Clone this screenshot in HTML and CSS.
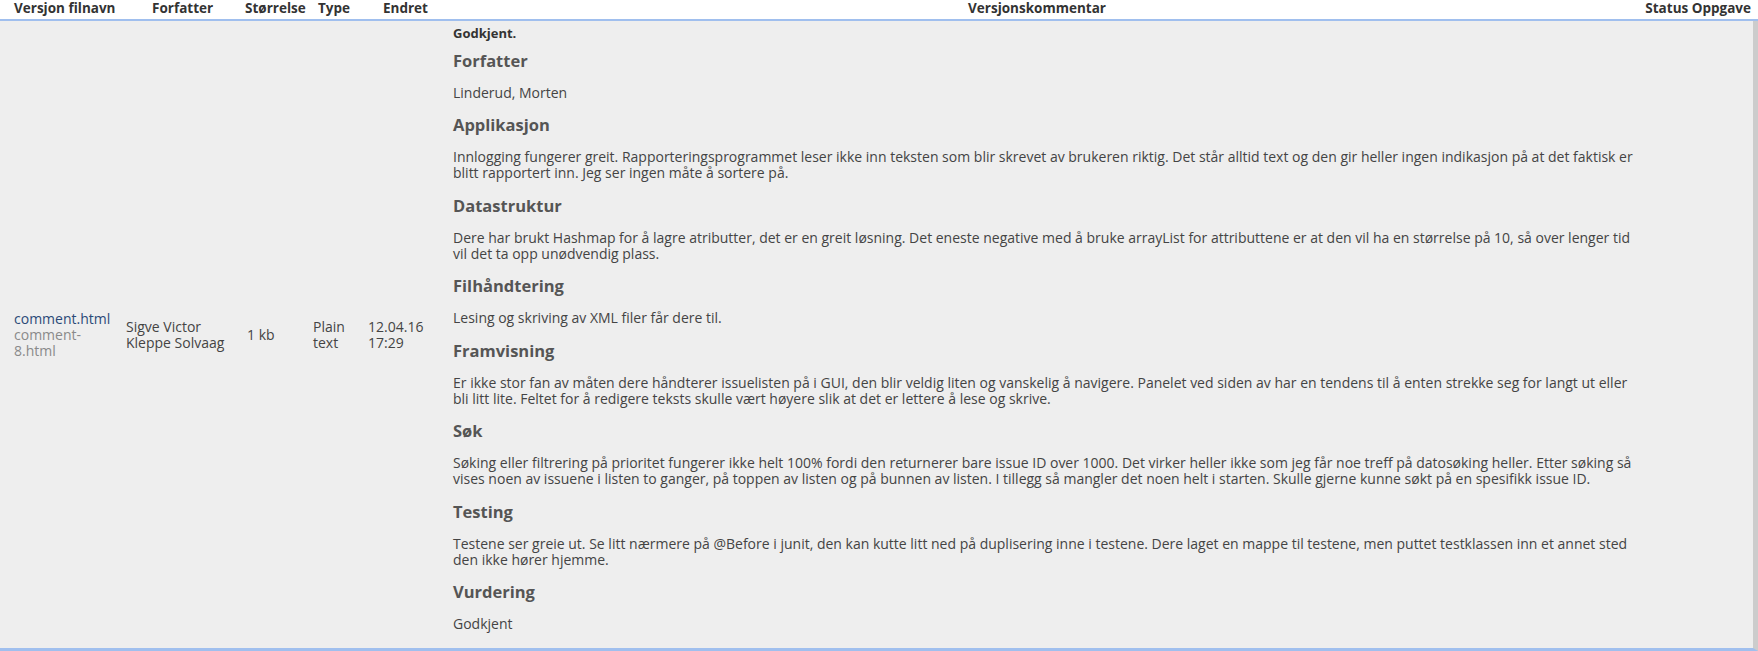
FILE: index.html
```html
<!DOCTYPE html>
<html lang="no">
<head>
<meta charset="utf-8">
<title>Versjoner</title>
<link rel="stylesheet" href="styles.css">
</head>
<body>
<div class="versions">
  <div class="head">
    <div class="th c1">Versjon filnavn</div>
    <div class="th c2">Forfatter</div>
    <div class="th c3">Størrelse</div>
    <div class="th c4">Type</div>
    <div class="th c5">Endret</div>
    <div class="th c6">Versjonskommentar</div>
    <div class="th c7">Status Oppgave</div>
  </div>
  <div class="row">
    <div class="td d1"><a class="file" href="#">comment.html</a><div class="orig">comment-8.html</div></div>
    <div class="td d2">Sigve Victor Kleppe Solvaag</div>
    <div class="td d3">1 kb</div>
    <div class="td d4">Plain text</div>
    <div class="td d5">12.04.16 17:29</div>
    <div class="td d6">
      <div class="summary">Godkjent.</div>
      <h3 class="sec first">Forfatter</h3>
      <p>Linderud, Morten</p>
      <h3 class="sec">Applikasjon</h3>
      <p>Innlogging fungerer greit. Rapporteringsprogrammet leser ikke inn teksten som blir skrevet av brukeren riktig. Det står alltid text og den gir heller ingen indikasjon på at det faktisk er blitt rapportert inn. Jeg ser ingen måte å sortere på.</p>
      <h3 class="sec">Datastruktur</h3>
      <p>Dere har brukt Hashmap for å lagre atributter, det er en greit løsning. Det eneste negative med å bruke arrayList for attributtene er at den vil ha en størrelse på 10, så over lenger tid vil det ta opp unødvendig plass.</p>
      <h3 class="sec">Filhåndtering</h3>
      <p>Lesing og skriving av XML filer får dere til.</p>
      <h3 class="sec">Framvisning</h3>
      <p>Er ikke stor fan av måten dere håndterer issuelisten på i GUI, den blir veldig liten og vanskelig å navigere. Panelet ved siden av har en tendens til å enten strekke seg for langt ut eller bli litt lite. Feltet for å redigere teksts skulle vært høyere slik at det er lettere å lese og skrive.</p>
      <h3 class="sec">Søk</h3>
      <p>Søking eller filtrering på prioritet fungerer ikke helt 100% fordi den returnerer bare issue ID over 1000. Det virker heller ikke som jeg får noe treff på datosøking heller. Etter søking så vises noen av issuene i listen to ganger, på toppen av listen og på bunnen av listen. I tillegg så mangler det noen helt i starten. Skulle gjerne kunne søkt på en spesifikk issue ID.</p>
      <h3 class="sec">Testing</h3>
      <p>Testene ser greie ut. Se litt nærmere på @Before i junit, den kan kutte litt ned på duplisering inne i testene. Dere laget en mappe til testene, men puttet testklassen inn et annet sted den ikke hører hjemme.</p>
      <h3 class="sec">Vurdering</h3>
      <p>Godkjent</p>
    </div>
    <div class="td d7"></div>
  </div>
</div>
</body>
</html>
```
FILE: styles.css
```css
html, body {
  margin: 0;
  padding: 0;
  background: #ffffff;
}
body {
  font-family: "Open Sans", "Noto Sans", "DejaVu Sans", sans-serif;
  font-size: 14px;
  line-height: 16px;
  color: #444;
}
.versions {
  width: 1758px;
}
.head {
  display: flex;
  height: 19px;
  border-bottom: 2px solid #a0bfee;
  font-size: 13.5px;
  font-weight: bold;
  color: #333;
  white-space: nowrap;
}
.th {
  line-height: 16px;
  flex: none;
  box-sizing: border-box;
}
.th.c1 { width: 152px; padding-left: 14px; }
.th.c2 { width: 93px; }
.th.c3 { width: 73px; }
.th.c4 { width: 65px; }
.th.c5 { width: 60px; }
.th.c6 { flex: 1; text-align: center; padding-right: 10px; }
.th.c7 { width: 117px; text-align: right; padding-right: 7px; }

.row {
  display: grid;
  grid-template-columns: 126px 121px 66px 55px 85px 1fr 103px;
  align-items: center;
  background: #eeeeee;
  border-right: 5px solid #cccccc;
  border-bottom: 3px solid #a0bfee;
}
.td {
  box-sizing: border-box;
}
.d1 { padding: 0 12px 0 14px; }
.d2 { padding-right: 10px; }
.d4 { padding-right: 10px; }
.d5 { padding-right: 15px; }
.d6 { padding: 4px 14px 16px 0; }
.file {
  color: #2b4a78;
  text-decoration: none;
}
.orig {
  color: #8a8a8a;
}
.summary {
  font-weight: bold;
  font-size: 13px;
  color: #333;
}
.sec {
  font-size: 16.5px;
  line-height: 18px;
  font-weight: bold;
  color: #555;
  margin: 15.5px 0 15px;
}
.sec.first {
  margin-top: 10.5px;
}
.d6 p {
  margin: 0;
}
```
